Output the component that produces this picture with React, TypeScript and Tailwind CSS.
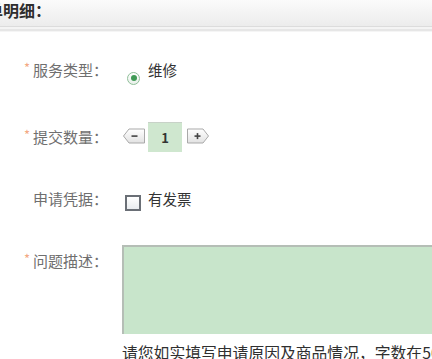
import React from "react";

const font = { fontFamily: '"Noto Sans CJK SC", "Noto Sans", sans-serif' };

function Star() {
  return <span className="mr-[3px] text-[13px] leading-none text-[#f3a883] relative top-[-3px]">*</span>;
}

function Label({ children, req }: { children: React.ReactNode; req?: boolean }) {
  return (
    <div className="w-[108px] shrink-0 flex items-center justify-end text-[15px] leading-[20px] text-[#6f6f6f]">
      {req && <Star />}
      <span>{children}</span>
    </div>
  );
}

function ArrowBtn({ dir }: { dir: "left" | "right" }) {
  const d =
    dir === "left"
      ? "M0.5 8 L6 1 H21.5 V15 H6 Z"
      : "M21.5 8 L16 1 H0.5 V15 H16 Z";
  return (
    <svg width="22" height="16" viewBox="0 0 22 16" className="shrink-0">
      <defs>
        <linearGradient id={"g" + dir} x1="0" y1="0" x2="0" y2="1">
          <stop offset="0" stopColor="#ffffff" />
          <stop offset="1" stopColor="#e2e2e2" />
        </linearGradient>
      </defs>
      <path d={d} fill={`url(#g${dir})`} stroke="#a9a9a9" strokeWidth="1" />
      {dir === "left" ? (
        <rect x="8.5" y="7.3" width="6" height="1.6" fill="#444" />
      ) : (
        <>
          <rect x="7.5" y="7.3" width="6" height="1.6" fill="#444" />
          <rect x="9.7" y="5.1" width="1.6" height="6" fill="#444" />
        </>
      )}
    </svg>
  );
}

export default function App() {
  return (
    <div className="w-[432px] h-[359px] overflow-hidden bg-white" style={font}>
      {/* header */}
      <div className="h-[27px] bg-gradient-to-b from-[#fbfbfb] to-[#ececec] border-b border-[#dcdcdc] overflow-hidden">
        <div className="ml-[-13px] pt-[1px] text-[16px] leading-[18px] font-bold text-[#2e2e2e]">单明细：</div>
      </div>
      <div className="h-[2px] bg-[#f4f4f4]" />
      <div className="h-[2px] bg-[#e6e6e6]" />
      <div className="h-[1px] bg-[#f5f5f5]" />

      {/* row 1 */}
      <div className="mt-[23px] h-[30px] flex items-center">
        <Label req>服务类型：</Label>
        <div className="ml-[19px] flex items-center">
          <span className="relative top-[8px] w-[13px] h-[13px] rounded-full border border-[#8fbf99] bg-gradient-to-b from-[#ffffff] to-[#e8efe9] flex items-center justify-center">
            <span className="w-[6px] h-[6px] rounded-full bg-[#3f9a55]" />
          </span>
          <span className="ml-[8px] text-[14.5px] leading-[20px] text-[#333]">维修</span>
        </div>
      </div>

      {/* row 2 */}
      <div className="mt-[37px] h-[30px] flex items-center">
        <Label req>提交数量：</Label>
        <div className="ml-[15px] flex items-center">
          <span className="relative top-[-1px]"><ArrowBtn dir="left" /></span>
          <div className="ml-[3px] w-[34px] h-[30px] bg-[#cfe7cf] border-t border-[#c8d2c8] flex items-center justify-center text-[13px] font-bold text-[#333]">
            1
          </div>
          <span className="ml-[5px] relative top-[-1px]"><ArrowBtn dir="right" /></span>
        </div>
      </div>

      {/* row 3 */}
      <div className="mt-[32px] h-[30px] flex items-center">
        <Label>申请凭据：</Label>
        <div className="ml-[17px] flex items-center">
          <span className="relative top-[4px] w-[16px] h-[16px] border-2 border-[#6a6f76] bg-gradient-to-b from-[#ffffff] to-[#e9ecef]" />
          <span className="ml-[7px] text-[14.5px] leading-[20px] text-[#333]">有发票</span>
        </div>
      </div>

      {/* row 4 */}
      <div className="mt-[31px] flex items-start">
        <div className="mt-[6px]">
          <Label req>问题描述：</Label>
        </div>
        <div className="ml-[14px]">
          <div className="w-[330px] h-[89px] bg-[#c8e5cb] border-t-2 border-l-2 border-[#b5beb6]" />
          <div className="mt-[9px] w-[340px] whitespace-nowrap text-[15.8px] leading-[20px] text-[#2f2f2f]">
            请您如实填写申请原因及商品情况，字数在500字以内。
          </div>
        </div>
      </div>
    </div>
  );
}
